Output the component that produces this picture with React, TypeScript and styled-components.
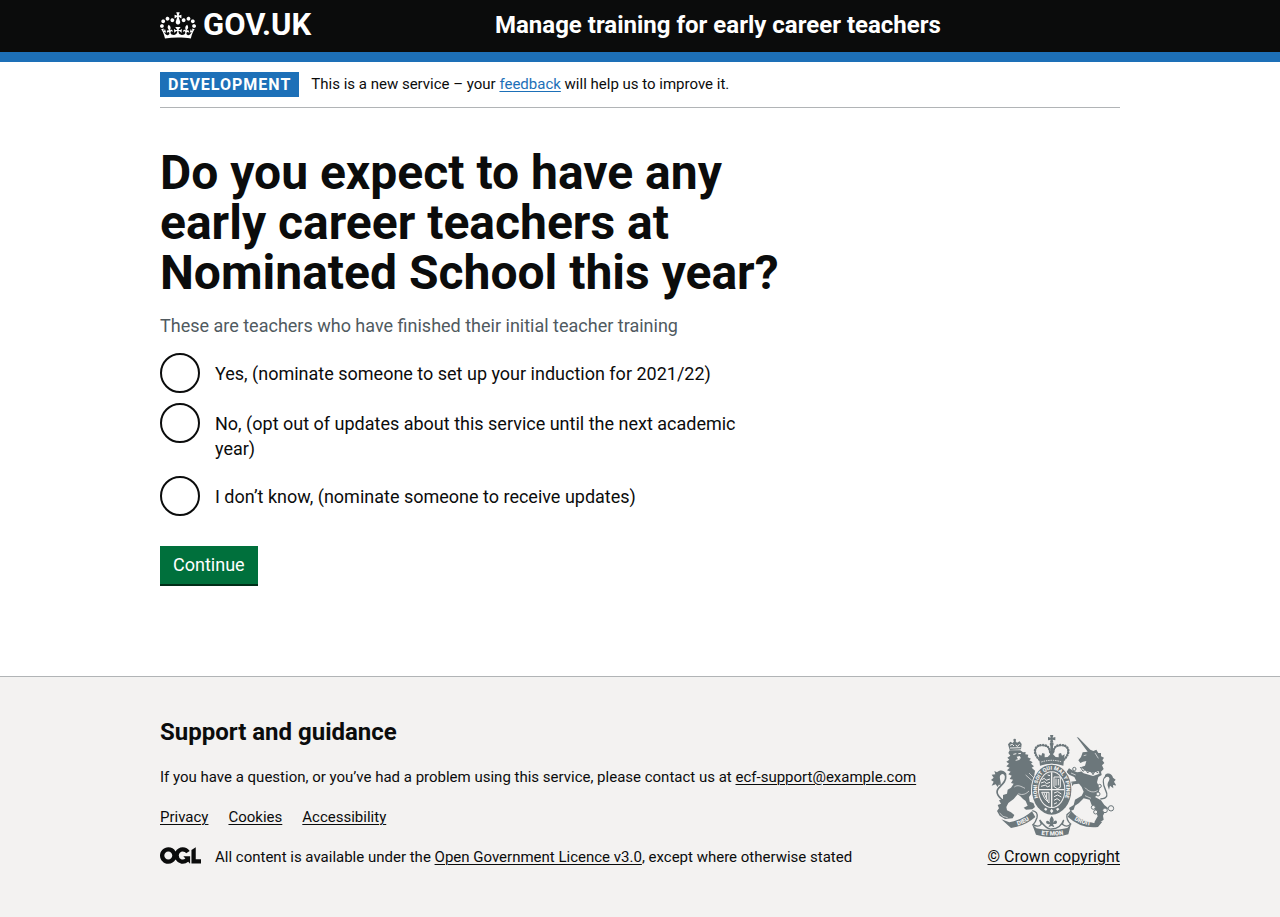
import React from 'react';
import styled, { createGlobalStyle } from 'styled-components';

const ink = '#0b0c0c';
const blue = '#1d70b8';
const rule = '#b1b4b6';
const canvas = '#f3f2f1';
const crest = '#6c777b';

const GlobalStyle = createGlobalStyle`
  *, *::before, *::after { box-sizing: border-box; }
  html { background: ${canvas}; }
  body {
    margin: 0;
    background: #fff;
    color: ${ink};
    font-family: Roboto, "Liberation Sans", sans-serif;
    font-size: 18px;
    line-height: 25px;
  }
  h1, h2, p, ul, fieldset { margin: 0; padding: 0; border: 0; }
`;

const Container = styled.div`
  max-width: 1020px;
  margin: 0 auto;
  padding: 0 30px;
`;

const Header = styled.header`
  background: ${ink};
  border-bottom: 10px solid ${blue};
`;

const HeaderRow = styled(Container)`
  display: flex;
  align-items: flex-start;
  min-height: 52px;
`;

const HeaderLogo = styled.div`
  display: flex;
  flex: 0 0 335px;
`;

const HomeLink = styled.a`
  display: inline-flex;
  align-items: center;
  gap: 7px;
  color: #fff;
  font-size: 31px;
  font-weight: 700;
  line-height: 50px;
  text-decoration: none;
`;

const ServiceLink = styled.a`
  color: #fff;
  font-size: 24px;
  font-weight: 700;
  line-height: 50px;
  text-decoration: none;
`;

const PhaseBanner = styled.div`
  display: flex;
  align-items: flex-start;
  gap: 12px;
  padding: 10px 0;
  border-bottom: 1px solid ${rule};
  font-size: 15px;
  line-height: 24px;
`;

const Tag = styled.strong`
  padding: 0 8px;
  background: ${blue};
  color: #fff;
  font-size: 16px;
  line-height: 25px;
  letter-spacing: 1px;
  text-transform: uppercase;
`;

const TextLink = styled.a<{ $tone?: string }>`
  color: ${(p) => p.$tone ?? ink};
  text-decoration: underline;
  text-decoration-thickness: 1px;
  text-underline-offset: 2px;
`;

const Main = styled.main`
  padding: 40px 0 90px;
`;

const Question = styled.form`
  max-width: 630px;
`;

const Legend = styled.legend`
  padding: 0;
`;

const Title = styled.h1`
  font-size: 48px;
  font-weight: 700;
  line-height: 50px;
`;

const Hint = styled.p`
  margin: 15px 0;
  color: #505a5f;
`;

const Radios = styled.div`
  display: grid;
  gap: 10px;
  margin-bottom: 30px;
`;

const RadioItem = styled.div`
  display: flex;
  align-items: flex-start;
  min-height: 40px;
`;

const RadioInput = styled.input`
  flex: none;
  width: 40px;
  height: 40px;
  margin: 0;
  border: 2px solid ${ink};
  border-radius: 50%;
  background: #fff;
  appearance: none;
  cursor: pointer;
  &:checked { box-shadow: inset 0 0 0 8px #fff; background: ${ink}; }
  &:focus { outline: 3px solid #ffdd00; }
`;

const RadioLabel = styled.label`
  padding: 8px 15px 5px;
  cursor: pointer;
`;

const Button = styled.button`
  display: block;
  margin: 0 0 2px;
  padding: 0 13px;
  border: 0;
  background: #00703c;
  box-shadow: 0 2px 0 #002d18;
  color: #fff;
  font: inherit;
  line-height: 38px;
  cursor: pointer;
`;

const Footer = styled.footer`
  padding: 40px 0 50px;
  border-top: 1px solid ${rule};
  background: ${canvas};
  font-size: 15px;
  line-height: 20px;
`;

const FooterRow = styled(Container)`
  display: flex;
  flex-wrap: wrap;
  align-items: flex-end;
  justify-content: space-between;
  gap: 20px;
`;

const FooterContent = styled.div`
  display: grid;
  gap: 20px;
`;

const FooterHeading = styled.h2`
  font-size: 24px;
  font-weight: 700;
  line-height: 30px;
`;

const LinkList = styled.ul`
  display: flex;
  flex-wrap: wrap;
  gap: 20px;
  list-style: none;
`;

const Licence = styled.div`
  display: flex;
  align-items: center;
  gap: 14px;
`;

const Copyright = styled.a`
  display: flex;
  flex-direction: column;
  align-items: center;
  gap: 10px;
  color: ${ink};
  font-size: 16px;
  text-decoration-thickness: 1px;
  text-underline-offset: 2px;
`;

const OglMark = styled.svg`
  align-self: flex-start;
  flex: none;
`;

function Crown() {
  return (
    <svg width="36" height="27" viewBox="0 0 132 97" fill="currentColor" fillRule="evenodd" aria-hidden="true">
      <path d="M25 30.2c3.5 1.5 7.7-.2 9.1-3.7 1.5-3.6-.2-7.8-3.9-9.2-3.6-1.4-7.6.3-9.1 3.9-1.4 3.5.3 7.5 3.9 9zM9 39.5c3.6 1.5 7.8-.2 9.2-3.7 1.5-3.6-.2-7.8-3.9-9.1-3.6-1.5-7.6.2-9.1 3.8-1.4 3.5.3 7.5 3.8 9zM4.4 57.2c3.5 1.5 7.7-.2 9.1-3.8 1.5-3.6-.2-7.7-3.9-9.1-3.5-1.5-7.6.3-9.1 3.8-1.4 3.5.3 7.6 3.9 9.1zm38.3-21.4c3.5 1.5 7.7-.2 9.1-3.8 1.5-3.6-.2-7.7-3.9-9.1-3.6-1.5-7.6.3-9.1 3.8-1.3 3.6.4 7.7 3.9 9.1zm64.4-5.6c-3.6 1.5-7.8-.2-9.1-3.7-1.5-3.6.2-7.8 3.8-9.2 3.6-1.4 7.7.3 9.2 3.9 1.3 3.5-.4 7.5-3.9 9zm15.9 9.3c-3.6 1.5-7.7-.2-9.1-3.7-1.5-3.6.2-7.8 3.7-9.1 3.6-1.5 7.7.2 9.2 3.8 1.5 3.5-.3 7.5-3.8 9zm4.7 17.7c-3.6 1.5-7.8-.2-9.2-3.8-1.5-3.6.2-7.7 3.9-9.1 3.6-1.5 7.7.3 9.2 3.8 1.3 3.5-.4 7.6-3.9 9.1zM89.3 35.8c-3.6 1.5-7.8-.2-9.2-3.8-1.4-3.6.2-7.7 3.9-9.1 3.6-1.5 7.7.3 9.2 3.8 1.4 3.6-.3 7.7-3.9 9.1zM69.7 17.7l8.9 4.7V9.3l-8.9 2.8c-.2-.3-.5-.6-.9-.9L72.4 0H59.6l3.5 11.2c-.3.3-.6.5-.9.9l-8.8-2.8v13.1l8.8-4.7c.3.3.6.7.9.9l-5 15.4v.1c-.2.8-.4 1.6-.4 2.4 0 4.1 3.1 7.5 7 8.1h.2c.3 0 .7.1 1 .1.4 0 .7 0 1-.1h.2c4-.6 7.1-4.1 7.1-8.1 0-.8-.1-1.7-.4-2.4V34l-5.1-15.4c.4-.2.7-.6 1-.9zM66 92.8c16.9 0 32.8 1.1 47.1 3.2 4-16.9 8.9-26.7 14-33.5l-9.6-3.4c1 4.9 1.1 7.2 0 10.2-1.5-1.4-3-4.3-4.2-8.7L108.6 76c2.8-2 5-3.2 7.5-3.3-4.4 9.4-10 11.9-13.6 11.2-4.3-.8-6.3-4.6-5.6-7.9 1-4.7 5.7-5.9 8-.5 4.3-8.7-3-11.4-7.6-8.8 7.1-7.2 7.9-13.5 2.1-21.1-8 6.1-8.1 12.3-4.5 20.8-4.7-5.4-12.1-2.5-9.5 6.2 3.4-5.2 7.9-2 7.2 3.1-.6 4.3-6.4 7.8-13.5 7.2-10.3-.9-10.9-8-11.2-13.8 2.5-.5 7.1 1.8 11 7.3L80.2 60c-4.1 4.4-8 5.3-12.3 5.4 1.4-4.4 8-11.6 8-11.6H55.5s6.4 7.2 7.9 11.6c-4.2-.1-8-1-12.3-5.4l1.4 16.4c3.9-5.5 8.5-7.7 10.9-7.3-.3 5.8-.9 12.8-11.1 13.8-7.2.6-12.9-2.9-13.5-7.2-.7-5 3.8-8.3 7.1-3.1 2.7-8.7-4.6-11.6-9.4-6.2 3.7-8.5 3.6-14.7-4.6-20.8-5.8 7.6-5 13.9 2.2 21.1-4.7-2.6-11.9.1-7.7 8.8 2.3-5.5 7.1-4.2 8.1.5.7 3.3-1.3 7.1-5.7 7.9-3.5.7-9-1.8-13.5-11.2 2.5.1 4.7 1.3 7.5 3.3l-4.7-15.4c-1.2 4.4-2.7 7.2-4.3 8.7-1.1-3-.9-5.3 0-10.2l-9.5 3.4c5 6.9 9.9 16.7 14 33.5 14.8-2.1 30.8-3.2 47.7-3.2z" />
    </svg>
  );
}

function OglLogo() {
  return (
    <OglMark width="41" height="17" viewBox="0 0 483.2 195.7" fill="currentColor" role="img" aria-label="Open Government Licence">
      <path d="M421.5 142.8V.1l-50.7 32.3v161.1h112.4v-50.7zm-122.3-9.6A47.12 47.12 0 0 1 221 97.8c0-26 21.1-47.1 47.1-47.1 16.7 0 31.4 8.7 39.7 21.8l42.7-27.2A97.63 97.63 0 0 0 268.1 0c-36.5 0-68.3 20.1-85.1 49.7A98 98 0 0 0 97.8 0C43.9 0 0 43.9 0 97.8s43.9 97.8 97.8 97.8c36.5 0 68.3-20.1 85.1-49.7a97.76 97.76 0 0 0 149.6 25.4l19.4 22.2h3v-87.8h-80l24.3 27.5zM97.8 145c-26 0-47.1-21.1-47.1-47.1s21.1-47.1 47.1-47.1 47.1 21.1 47.1 47.1S123.8 145 97.8 145" />
    </OglMark>
  );
}

function RoyalArms() {
  return (
    <svg width="125" height="102" viewBox="36 30 375 306" fill={crest} stroke="none" fontFamily="Roboto, sans-serif" fontWeight="700" aria-hidden="true">
      {/* lion's tail */}
      <path d="M84 236C56 216 47 202 60 188C71 177 82 168 80 154C78 142 66 142 60 152C54 166 68 170 62 180" fill="none" stroke={crest} strokeWidth="5" />
      <path d="M82 146C74 134 62 134 54 142L46 138L49 148L38 149L44 158L36 165L44 170L38 182L50 178L56 186L62 174C68 165 58 158 64 150C70 143 77 145 82 152Z" />
      {/* lion */}
      <path d="M92 76L124 76L132 82L140 81L139 88L148 89L146 97L156 101L151 106L161 112L156 116L165 124L158 128L168 137L166 150L176 158L170 164L182 170L176 180L168 176L164 188L157 192L156 208L150 216L152 230L163 234L168 246L160 253L141 254L134 248L146 242L140 228L132 222L124 214L116 208L104 222L88 234L82 246L84 256L96 262L106 270L101 280L78 282L62 272L54 258L60 250L56 240L66 236L60 226L72 222L72 210L84 206L86 194L96 188L104 176L96 174L102 164L92 162L98 152L88 148L95 140L84 136L92 128L82 124L90 116L82 110L91 104L85 98L94 92L88 84Z" />
      <g fill="none" stroke={canvas} strokeWidth="3">
        <path d="M103 88L112 86M118 86L126 85M110 106L122 103" />
        <path d="M106 186C116 178 126 184 138 190M118 206C132 212 142 206 150 198" strokeWidth="2" />
        <path d="M140 150L158 166M150 144L166 160M72 274L86 278M62 264L72 274" strokeWidth="2" />
      </g>
      <path d="M113 95L122 93L126 100L117 103Z" fill={canvas} />
      {/* lion's crown */}
      <path d="M92 75L87 58L94 50L101 54L107 46L114 53L122 49L128 57L126 73Z" />
      <path d="M93 61L100 58L105 63M110 60L115 64L122 58M93 69L125 68" fill="none" stroke={canvas} strokeWidth="3" />
      <circle cx="107" cy="45" r="4" />

      {/* unicorn's tail */}
      <path d="M364 222C388 220 386 208 380 196C371 178 370 160 382 153C396 149 401 160 396 172" fill="none" stroke={crest} strokeWidth="4" />
      <path d="M378 150C388 140 400 148 402 158L410 164L405 170L412 182L402 180L403 190L393 182L390 194L386 182C384 170 393 168 391 160C390 154 384 152 378 157Z" />
      {/* unicorn */}
      <path d="M293 36L299 38L334 74L343 78L352 74L358 84L366 84L366 94L375 98L370 106L376 114L369 121L374 132L366 140L368 150L358 156L354 172L362 190L358 208L348 216L366 226L376 240L388 250L380 256L372 272L374 284L352 300L346 292L356 274L350 258L338 240L332 224L314 220L300 234L288 242L284 254L274 258L270 249L284 240L288 224L308 212L314 200L308 186L300 176L284 178L272 192L264 184L276 170L292 168L286 156L272 150L262 142L270 130L280 136L294 142L306 140L300 128L318 122L322 108L312 110L304 114L298 106L306 96L311 82L326 80Z" />
      <path d="M300 128L316 141L342 148L360 142" fill="none" stroke={canvas} strokeWidth="9" />
      <path d="M304 126L312 139L320 132L326 144L334 135L342 149L348 138L358 144" fill="none" stroke={crest} strokeWidth="3" />
      <g fill="none" stroke={canvas} strokeWidth="2">
        <path d="M314 92L322 90M348 84L358 100M276 144L290 150M272 182L280 174" />
        <path d="M318 188C330 202 346 204 356 196M318 212L336 220" />
      </g>
      <g fill={canvas} stroke={crest} strokeWidth="3">
        <circle cx="286" cy="132" r="5" />
        <circle cx="343" cy="247" r="6" />
        <circle cx="350" cy="261" r="6" />
        <circle cx="378" cy="256" r="7" />
        <circle cx="396" cy="250" r="8" />
        <circle cx="357" cy="207" r="6" />
        <circle cx="362" cy="183" r="5" />
      </g>

      {/* royal crown */}
      <path d="M213 30H223L221 38L229 36V46L221 44L223 52H213L215 44L207 46V36L215 38Z" />
      <circle cx="218" cy="57" r="6" />
      <g fill="none" stroke={crest} strokeWidth="7" strokeDasharray="1 7" strokeLinecap="round">
        <path d="M181 104C158 82 167 58 192 60C206 61 212 68 214 84" />
        <path d="M255 104C278 82 269 58 244 60C230 61 224 68 222 84" />
      </g>
      <g fill="none" stroke={crest} strokeWidth="3">
        <path d="M183 104C160 82 169 60 192 62C206 63 211 70 213 84" />
        <path d="M253 104C276 82 267 60 244 62C230 63 225 70 223 84" />
      </g>
      <path d="M214 60H222V104H214Z" />
      <path d="M179 88L187 92L190 84L197 86L197 97L206 96L214 88L209 79H227L222 88L230 96L239 97L239 86L246 84L249 92L257 88L253 122Q218 110 183 122Z" />
      <path d="M187 111Q218 101 249 111" fill="none" stroke={canvas} strokeWidth="3" strokeDasharray="4 3" />

      {/* garter and shield */}
      <ellipse cx="218" cy="194" rx="62" ry="78" fill={canvas} />
      <ellipse cx="218" cy="194" rx="59" ry="75" />
      <ellipse cx="218" cy="194" rx="41" ry="55" fill={canvas} />
      <ellipse cx="218" cy="194" rx="38" ry="52" />
      <path id="garter" d="M188 236A44 59 0 1 1 248 236" fill="none" />
      <text fontSize="16" fontWeight="900" textAnchor="middle" fill={canvas}>
        <textPath href="#garter" startOffset="50%">HONI SOIT QUI MAL Y PENSE</textPath>
      </text>
      <g fill="none" stroke={canvas}>
        <path d="M218 142V246M180 194H256" strokeWidth="4" />
        <path d="M188 164L196 160L201 166L213 162M186 174L197 170L202 176L213 172M186 184L200 180L205 186L213 182M206 150L213 152" strokeWidth="3" />
        <path d="M225 156H244V187L235 191L225 185ZM231 161V182M238 162V181" strokeWidth="3" />
        <path d="M225 204L236 200L247 207M225 215L236 210L247 216M225 226L234 221L243 227M225 237L234 233" strokeWidth="3" />
        <path d="M188 202H210V234Q196 224 188 202ZM195 204L206 228M203 203V222" strokeWidth="3" />
      </g>
      <path d="M218 251L213 258L218 265L223 258ZM199 248L205 252L201 258L195 253ZM237 248L231 252L235 258L241 253Z" fill={canvas} />

      {/* ribbon */}
      <path d="M67 283L91 292Q129 285 159 259L169 276Q139 303 96 309Z" />
      <path d="M277 259Q300 287 344 294L370 290L357 306Q306 312 266 275Z" />
      <path d="M160 257Q178 260 174 278Q169 293 162 299Q179 309 187 297L182 285Q204 315 218 312Q244 312 254 285L250 298Q264 309 275 297Q261 285 264 269L277 258" fill="none" stroke={crest} strokeWidth="4" />
      <path d="M159 297L172 310Q218 320 265 309L276 297L268 328Q218 344 171 329Z" />
      <path id="motto-left" d="M96 306Q138 299 168 272" fill="none" />
      <path id="motto-centre" d="M174 327Q218 337 266 326" fill="none" />
      <path id="motto-right" d="M269 271Q304 304 356 302" fill="none" />
      <g fill={canvas} fontSize="18" fontWeight="900" textAnchor="middle">
        <text><textPath href="#motto-left" startOffset="50%">DIEU</textPath></text>
        <text><textPath href="#motto-centre" startOffset="50%">ET MON</textPath></text>
        <text><textPath href="#motto-right" startOffset="50%">DROIT</textPath></text>
      </g>
      {/* plant badge */}
      <path d="M218 273Q208 285 214 293Q204 282 201 291Q201 299 213 297L208 307L217 303L226 307L222 297Q235 299 234 290Q230 282 222 293Q228 284 218 273Z" />
    </svg>
  );
}

const options = [
  { id: 'yes', label: 'Yes, (nominate someone to set up your induction for 2021/22)' },
  { id: 'no', label: 'No, (opt out of updates about this service until the next academic year)' },
  { id: 'unknown', label: 'I don’t know, (nominate someone to receive updates)' },
];

export default function App() {
  return (
    <>
      <GlobalStyle />
      <Header>
        <HeaderRow>
          <HeaderLogo>
            <HomeLink href="#">
              <Crown />
              GOV.UK
            </HomeLink>
          </HeaderLogo>
          <ServiceLink href="#">Manage training for early career teachers</ServiceLink>
        </HeaderRow>
      </Header>
      <Container>
        <PhaseBanner>
          <Tag>Development</Tag>
          <span>
            This is a new service – your <TextLink href="#" $tone={blue}>feedback</TextLink> will help us to improve it.
          </span>
        </PhaseBanner>
        <Main>
          <Question onSubmit={(e) => e.preventDefault()}>
            <fieldset aria-describedby="hint">
              <Legend>
                <Title>Do you expect to have any early career teachers at Nominated School this year?</Title>
              </Legend>
              <Hint id="hint">These are teachers who have finished their initial teacher training</Hint>
              <Radios>
                {options.map((o) => (
                  <RadioItem key={o.id}>
                    <RadioInput type="radio" name="expect" id={o.id} value={o.id} />
                    <RadioLabel htmlFor={o.id}>{o.label}</RadioLabel>
                  </RadioItem>
                ))}
              </Radios>
            </fieldset>
            <Button type="submit">Continue</Button>
          </Question>
        </Main>
      </Container>
      <Footer>
        <FooterRow>
          <FooterContent>
            <FooterHeading>Support and guidance</FooterHeading>
            <p>
              If you have a question, or you’ve had a problem using this service, please contact us at{' '}
              <TextLink href="mailto:ecf-support@example.com">ecf-support@example.com</TextLink>
            </p>
            <LinkList>
              <li><TextLink href="#">Privacy</TextLink></li>
              <li><TextLink href="#">Cookies</TextLink></li>
              <li><TextLink href="#">Accessibility</TextLink></li>
            </LinkList>
            <Licence>
              <OglLogo />
              <span>
                All content is available under the <TextLink href="#">Open Government Licence v3.0</TextLink>, except where otherwise stated
              </span>
            </Licence>
          </FooterContent>
          <Copyright href="#">
            <RoyalArms />
            © Crown copyright
          </Copyright>
        </FooterRow>
      </Footer>
    </>
  );
}
